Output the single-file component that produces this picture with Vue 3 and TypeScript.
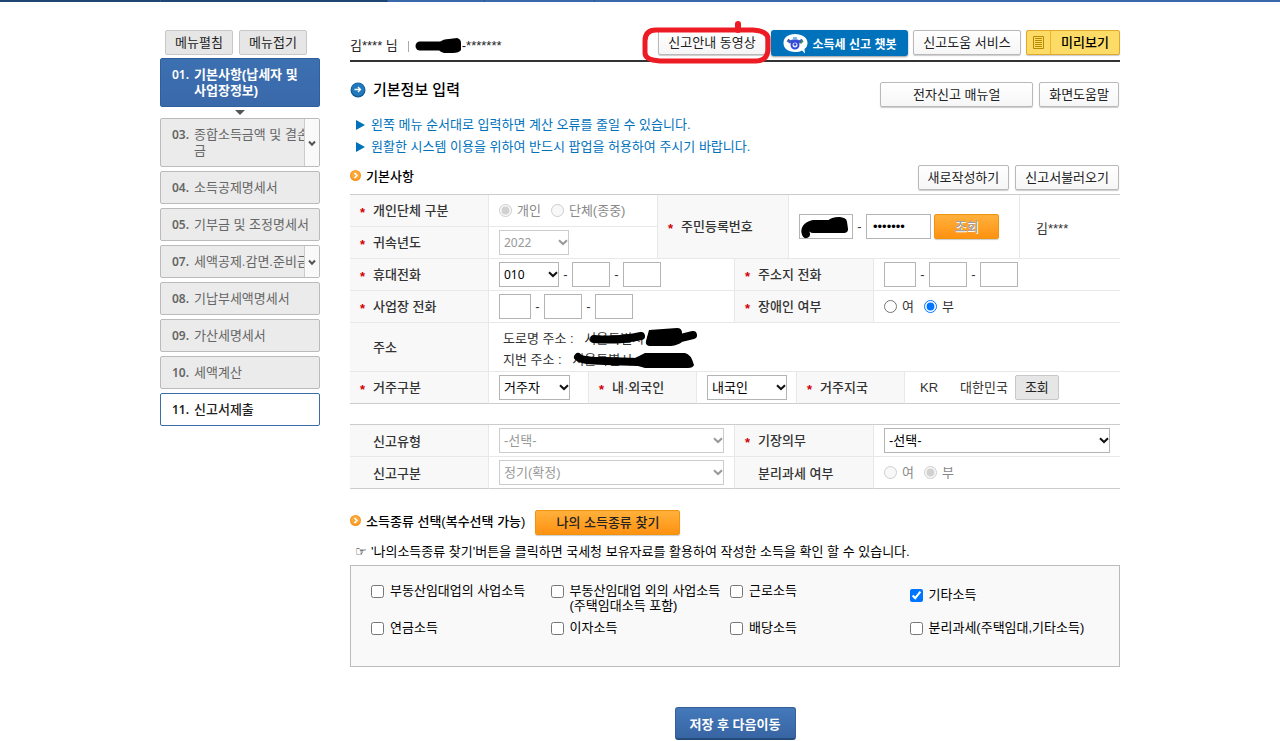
<script setup lang="ts">
import { ref } from 'vue'

interface MenuItem {
  no: string
  label: string
  state?: 'current' | 'ready'
  tall?: boolean
  expandable?: boolean
}

interface Income {
  id: string
  label: string
  note?: string
  low?: boolean
}

const menu: MenuItem[] = [
  { no: '01.', label: '기본사항(납세자 및 사업장정보)', state: 'current', tall: true },
  { no: '03.', label: '종합소득금액 및 결손금', tall: true, expandable: true },
  { no: '04.', label: '소득공제명세서' },
  { no: '05.', label: '기부금 및 조정명세서' },
  { no: '07.', label: '세액공제.감면.준비금', expandable: true },
  { no: '08.', label: '기납부세액명세서' },
  { no: '09.', label: '가산세명세서' },
  { no: '10.', label: '세액계산' },
  { no: '11.', label: '신고서제출', state: 'ready' },
]

const incomes: Income[] = [
  { id: 'rent', label: '부동산임대업의 사업소득' },
  { id: 'business', label: '부동산임대업 외의 사업소득', note: '(주택임대소득 포함)' },
  { id: 'wage', label: '근로소득' },
  { id: 'other', label: '기타소득', low: true },
  { id: 'pension', label: '연금소득' },
  { id: 'interest', label: '이자소득' },
  { id: 'dividend', label: '배당소득' },
  { id: 'separate', label: '분리과세(주택임대,기타소득)' },
]

const chosen = ref<string[]>(['other'])
const entity = ref('person')
const disabledPerson = ref('no')
const separateTax = ref('no')
const secret = ref('0000000')
</script>

<template>
  <div class="page">
    <div class="gnb"><span class="gnb-a"></span><span class="gnb-b"></span><span class="gnb-c"></span><span class="gnb-d"></span></div>
    <div class="wrap">
      <aside class="side">
        <div class="fold">
          <button type="button" class="btn gray">메뉴펼침</button>
          <button type="button" class="btn gray">메뉴접기</button>
        </div>
        <ul class="menu">
          <li v-for="m in menu" :key="m.no" :class="[m.state, { tall: m.tall }]">
            <div class="item">
              <a href="#"><span class="no">{{ m.no }}</span><span class="name">{{ m.label }}</span></a>
              <button v-if="m.expandable" type="button" class="expand" :aria-label="m.label">
                <svg width="8" height="7" viewBox="0 0 8 7"><path d="M1 1.5 4 4.7 7 1.5" fill="none" stroke="#555" stroke-width="2" /></svg>
              </button>
            </div>
            <svg v-if="m.state === 'current'" class="down" width="10" height="5" viewBox="0 0 10 5"><path d="M0 0h10L5 5z" fill="#555" /></svg>
          </li>
        </ul>
      </aside>

      <main class="main">
        <header class="head">
          <div class="user">
            <span>김**** 님</span><i class="bar"></i>
            <svg class="mark-user" width="47" height="16" viewBox="0 0 47 16">
              <path d="M5 8 L28 8" stroke="#000" stroke-width="9" stroke-linecap="round" />
              <path d="M25 4 Q28 1 34 1 L42 0 Q46 1 46 5 L46 12 Q44 15 38 15 L29 15 Q25 14 24 12Z" />
            </svg>
            <span>-*******</span>
          </div>
          <div class="tools">
            <div class="ringed">
              <button type="button" class="btn w108">신고안내 동영상</button>
              <svg class="ring" width="132" height="44" viewBox="0 0 132 44">
                <path d="M15 9 L112 9 Q127 10 127 18 L127 29 Q126 40 115 40 L19 40 Q4 39 4 32 L4 20 Q4 9 15 9Z" fill="none" stroke="#ed1c24" stroke-width="5" />
                <path d="M97 3V9" stroke="#ed1c24" stroke-width="6" stroke-linecap="round" />
              </svg>
            </div>
            <button type="button" class="chat">
              <svg width="25" height="21" viewBox="0 0 25 21">
                <path d="M12 1C5 1 .5 4.500 .5 10S5 19 12 19c3 0 5-.5 7-1.500L22 20.500 21.500 16c2-1.500 3-3.500 3-6C24.500 4.500 19 1 12 1z" fill="#fff" />
                <path d="M4.500 7 8 9.500M19.500 7 16 9.500" stroke="#3b5fae" stroke-width="3" />
                <path d="M7 7.500q5-2.500 10 0l-1 3H8z" fill="#3c50d8" />
                <circle cx="12" cy="12" r="3.500" fill="#dfe8ff" stroke="#3048d8" stroke-width="2" />
                <circle cx="12" cy="11.500" r="1.300" fill="#2b3fd0" />
                <path d="M10 4h4v2.500h-4z" fill="#7fb6e8" /><path d="m18.500 7 2 1.500-3 3z" fill="#3c9a4a" />
              </svg>
              소득세 신고 챗봇
            </button>
            <button type="button" class="btn w108">신고도움 서비스</button>
            <button type="button" class="preview">
              <span class="doc"><svg width="11" height="13" viewBox="0 0 11 13"><path d="M.5.5h10v12H.5zM2 2.500h7M2 4.500h7M2 6.500h7M2 8.500h7M2 10.500h7" fill="none" stroke="#b78a00" /></svg></span>
              <span class="preview-text">미리보기</span>
            </button>
          </div>
        </header>

        <div class="title-row">
          <svg width="16" height="16" viewBox="0 0 16 16"><circle cx="8" cy="8" r="7.500" fill="#145b94" /><circle cx="8" cy="7.500" r="6.500" fill="#2079bd" /><path d="M4.500 7.500h6M8 5l2.500 2.500L8 10" fill="none" stroke="#fff" stroke-width="1.300" /></svg>
          <h1>기본정보 입력</h1>
          <div class="btns">
            <button type="button" class="btn w153">전자신고 매뉴얼</button>
            <button type="button" class="btn">화면도움말</button>
          </div>
        </div>

        <ul class="info">
          <li><svg width="9" height="10" viewBox="0 0 9 10"><path d="M0 0 9 5 0 10z" fill="#0072bc" /></svg>왼쪽 메뉴 순서대로 입력하면 계산 오류를 줄일 수 있습니다.</li>
          <li><svg width="9" height="10" viewBox="0 0 9 10"><path d="M0 0 9 5 0 10z" fill="#0072bc" /></svg>원활한 시스템 이용을 위하여 반드시 팝업을 허용하여 주시기 바랍니다.</li>
        </ul>

        <div class="section">
          <svg class="dot" width="11" height="11" viewBox="0 0 11 11"><circle cx="5.500" cy="5.500" r="5.500" fill="#f7941d" /><circle cx="5.500" cy="5" r="4.300" fill="#fba93a" /><path d="m4.500 3 2.500 2.500L4.500 8" fill="none" stroke="#fff" stroke-width="1.500" /></svg>
          <h2>기본사항</h2>
          <div class="btns">
            <button type="button" class="btn">새로작성하기</button>
            <button type="button" class="btn">신고서불러오기</button>
          </div>
        </div>

        <table class="form">
          <colgroup>
            <col class="c139" /><col class="c100" /><col class="c69" /><col class="c39" /><col class="c38" /><col class="c54" />
            <col class="c8" /><col class="c77" /><col class="c31" /><col class="c115" /><col class="c100" />
          </colgroup>
          <tbody>
            <tr>
              <th scope="row"><i class="req">*</i>개인단체 구분</th>
              <td colspan="2">
                <div class="row radios faded">
                  <label><input v-model="entity" type="radio" name="entity" value="person" disabled />개인</label>
                  <label><input v-model="entity" type="radio" name="entity" value="group" disabled />단체(종중)</label>
                </div>
              </td>
              <th scope="row" colspan="3" rowspan="2"><i class="req">*</i>주민등록번호</th>
              <td colspan="4" rowspan="2">
                <div class="row">
                  <span class="hidden-id">
                    <input type="text" class="w54" aria-label="주민등록번호 앞자리" />
                    <svg class="mark-id" width="50" height="22" viewBox="0 0 50 22"><path d="M6 18 Q3 11 13 8 L30 8 Q33 5 39 5 L43 6 L44 13 L13 13" fill="#000" stroke="#000" stroke-width="8" stroke-linejoin="round" stroke-linecap="round" /></svg>
                  </span>
                  <span class="dash">-</span>
                  <input v-model="secret" type="password" class="w65" aria-label="주민등록번호 뒷자리" />
                  <button type="button" class="orange lookup" disabled>조회</button>
                </div>
              </td>
              <td rowspan="2" class="owner">김****</td>
            </tr>
            <tr>
              <th scope="row"><i class="req">*</i><label for="year">귀속년도</label></th>
              <td colspan="2">
                <span class="select digits w70 off"><select id="year" disabled><option>2022</option></select><svg viewBox="0 0 10 7"><path d="M1 1.200 5 5 9 1.200" /></svg></span>
              </td>
            </tr>
            <tr>
              <th scope="row"><i class="req">*</i><label for="mobile">휴대전화</label></th>
              <td colspan="4">
                <div class="row">
                  <span class="select digits w60"><select id="mobile"><option>010</option></select><svg viewBox="0 0 10 7"><path d="M1 1.200 5 5 9 1.200" /></svg></span>
                  <span class="dash">-</span><input type="text" class="w38" aria-label="휴대전화 가운데" />
                  <span class="dash">-</span><input type="text" class="w38" aria-label="휴대전화 끝" />
                </div>
              </td>
              <th scope="row" colspan="3"><i class="req">*</i><label for="home">주소지 전화</label></th>
              <td colspan="3">
                <div class="row">
                  <input id="home" type="text" class="w32" />
                  <span class="dash">-</span><input type="text" class="w38" aria-label="주소지 전화 가운데" />
                  <span class="dash">-</span><input type="text" class="w38" aria-label="주소지 전화 끝" />
                </div>
              </td>
            </tr>
            <tr>
              <th scope="row"><i class="req">*</i><label for="office">사업장 전화</label></th>
              <td colspan="4">
                <div class="row">
                  <input id="office" type="text" class="w32" />
                  <span class="dash">-</span><input type="text" class="w38" aria-label="사업장 전화 가운데" />
                  <span class="dash">-</span><input type="text" class="w38" aria-label="사업장 전화 끝" />
                </div>
              </td>
              <th scope="row" colspan="3"><i class="req">*</i>장애인 여부</th>
              <td colspan="3">
                <div class="row radios">
                  <label><input v-model="disabledPerson" type="radio" name="handicap" value="yes" />여</label>
                  <label><input v-model="disabledPerson" type="radio" name="handicap" value="no" />부</label>
                </div>
              </td>
            </tr>
            <tr class="address">
              <th scope="row"><i class="req"></i>주소</th>
              <td colspan="10">
                <p>도로명 주소 : <span class="addr">서울특별시
                  <svg class="first" width="114" height="20" viewBox="0 0 114 20"><path d="M9 11 Q35 13 56 8M66 11 L96 10 L108 7" fill="none" stroke="#000" stroke-width="8" stroke-linecap="round" /><path d="M64 2 L92 0 Q97 0 97 5 L97 14 Q93 17 86 18 L64 18 Q60 17 61 13Z" /></svg>
                </span></p>
                <p>지번 주소 : <span class="addr">서울특별시
                  <svg class="second" width="122" height="18" viewBox="0 0 122 18"><path d="M5 5 Q9 9 32 9 L66 10" fill="none" stroke="#000" stroke-width="8" stroke-linecap="round" /><path d="M60 7 L72 1 L112 1 Q118 2 121 13 Q120 16 115 16 L72 16 Q66 14 60 13Z" /></svg>
                </span></p>
              </td>
            </tr>
            <tr>
              <th scope="row"><i class="req">*</i><label for="reside">거주구분</label></th>
              <td><span class="select w71"><select id="reside"><option>거주자</option></select><svg viewBox="0 0 10 7"><path d="M1 1.200 5 5 9 1.200" /></svg></span></td>
              <th scope="row" colspan="2"><i class="req">*</i><label for="nation">내·외국인</label></th>
              <td colspan="3"><span class="select w80"><select id="nation"><option>내국인</option></select><svg viewBox="0 0 10 7"><path d="M1 1.200 5 5 9 1.200" /></svg></span></td>
              <th scope="row" colspan="2"><i class="req">*</i>거주지국</th>
              <td colspan="2">
                <div class="row country"><span class="code">KR</span><span>대한민국</span><button type="button" class="btn gray small">조회</button></div>
              </td>
            </tr>
          </tbody>
        </table>

        <table class="form second-form">
          <colgroup><col class="c139" /><col class="c246" /><col class="c139" /><col class="c246" /></colgroup>
          <tbody>
            <tr>
              <th scope="row"><i class="req"></i><label for="kind">신고유형</label></th>
              <td><span class="select wide off"><select id="kind" disabled><option>-선택-</option></select><svg viewBox="0 0 10 7"><path d="M1 1.200 5 5 9 1.200" /></svg></span></td>
              <th scope="row"><i class="req">*</i><label for="books">기장의무</label></th>
              <td><span class="select wide"><select id="books"><option>-선택-</option></select><svg viewBox="0 0 10 7"><path d="M1 1.200 5 5 9 1.200" /></svg></span></td>
            </tr>
            <tr>
              <th scope="row"><i class="req"></i><label for="period">신고구분</label></th>
              <td><span class="select wide off"><select id="period" disabled><option>정기(확정)</option></select><svg viewBox="0 0 10 7"><path d="M1 1.200 5 5 9 1.200" /></svg></span></td>
              <th scope="row"><i class="req"></i>분리과세 여부</th>
              <td>
                <div class="row radios faded">
                  <label><input v-model="separateTax" type="radio" name="separate" value="yes" disabled />여</label>
                  <label><input v-model="separateTax" type="radio" name="separate" value="no" disabled />부</label>
                </div>
              </td>
            </tr>
          </tbody>
        </table>

        <div class="section income-head">
          <svg class="dot" width="11" height="11" viewBox="0 0 11 11"><circle cx="5.500" cy="5.500" r="5.500" fill="#f7941d" /><circle cx="5.500" cy="5" r="4.300" fill="#fba93a" /><path d="m4.500 3 2.500 2.500L4.500 8" fill="none" stroke="#fff" stroke-width="1.500" /></svg>
          <h2>소득종류 선택(복수선택 가능)</h2>
          <button type="button" class="orange find">나의 소득종류 찾기</button>
        </div>
        <p class="note"><span class="hand">☞</span>'나의소득종류 찾기'버튼을 클릭하면 국세청 보유자료를 활용하여 작성한 소득을 확인 할 수 있습니다.</p>

        <div class="incomes">
          <label v-for="i in incomes" :key="i.id" :class="{ low: i.low }">
            <input v-model="chosen" type="checkbox" :value="i.id" />
            <span>{{ i.label }}<template v-if="i.note"><br />{{ i.note }}</template></span>
          </label>
        </div>

        <div class="foot"><button type="button" class="save">저장 후 다음이동</button></div>
      </main>
    </div>
  </div>
</template>

<style>
body {
  margin: 0;
  background: #fff;
}
</style>

<style scoped>
.page,
.page button,
.page input,
.page select {
  font-family: "Liberation Sans", "Noto Sans CJK KR", sans-serif;
  font-size: 13px;
}
.page {
  color: #333;
  line-height: 16px;
}
.page * {
  box-sizing: border-box;
}
ul,
p,
h1,
h2 {
  margin: 0;
  padding: 0;
}
ul {
  list-style: none;
}
button {
  cursor: pointer;
  white-space: nowrap;
}
i {
  font-style: normal;
}

.gnb {
  display: flex;
  height: 2px;
  background: #3a69ab;
}
.gnb span {
  border-right: 1px solid #2a5590;
}
.gnb-a {
  width: 161px;
  background: #1f4573;
}
.gnb-b {
  width: 227px;
  background: #1f4573;
}
.gnb-c {
  width: 97px;
}
.gnb-d {
  width: 110px;
}

.wrap {
  display: flex;
  gap: 30px;
  max-width: 960px;
  margin: 0 auto;
  padding-top: 28px;
}
.side {
  flex: 0 0 160px;
  min-width: 0;
}
.main {
  flex: 1;
  min-width: 0;
}

.btn {
  height: 25px;
  padding: 0 9px;
  border: 1px solid #b9b9b9;
  border-radius: 2px;
  background: linear-gradient(#fff, #f6f6f6);
  box-shadow: 0 1px 1px #ccc;
  color: #222;
  line-height: 21px;
}
.btn.gray {
  background: #e6e6e6;
  border-color: #c8c8c8;
  box-shadow: none;
}
.w108 {
  width: 108px;
}
.w153 {
  width: 153px;
}

.fold {
  display: flex;
  gap: 6px;
  padding-left: 5px;
}
.fold .btn {
  width: 68px;
  padding: 0;
}
.menu {
  display: flex;
  flex-direction: column;
  gap: 4px;
  margin-top: 3px;
}
.item {
  display: flex;
  height: 33px;
  overflow: hidden;
  border: 1px solid #bbb;
  border-radius: 2px;
  background: #ebebeb;
}
.tall .item {
  height: 49px;
}
.item a {
  display: flex;
  flex: 1;
  min-width: 0;
  overflow: hidden;
  padding: 8px 0 0 11px;
  color: #666;
  text-decoration: none;
}
.no {
  flex: 0 0 22px;
  font-family: "Noto Sans", sans-serif;
  font-size: 12px;
  font-weight: 600;
}
.name {
  flex: 0 0 124px;
}
.expand {
  flex: 0 0 15px;
  padding: 0;
  border: 0;
  border-left: 1px solid #ccc;
  background: #f9f9f9;
}
.current .item {
  border-color: #2f5f9f;
  background: linear-gradient(#3c70b1, #3a69aa);
}
.current a {
  color: #fff;
  font-weight: 700;
}
.current .name {
  flex-basis: 112px;
}
.down {
  display: block;
  margin: 3px auto -1px;
}
.ready .item {
  border-color: #3a6eab;
  background: #fff;
}
.ready a {
  color: #222;
  font-weight: 500;
}

.head {
  display: flex;
  justify-content: space-between;
  height: 32px;
  border-bottom: 2px solid #333;
}
.user {
  display: flex;
  align-items: center;
  height: 32px;
  color: #222;
}
.bar {
  width: 1px;
  height: 11px;
  margin: 0 6px 0 10px;
  background: #aaa;
}
.tools {
  display: flex;
  gap: 5px;
}
.ringed {
  position: relative;
}
.ring {
  position: absolute;
  left: -17px;
  top: -9px;
  z-index: 1;
  pointer-events: none;
}
.chat {
  display: flex;
  align-items: center;
  justify-content: center;
  gap: 5px;
  width: 137px;
  height: 26px;
  padding: 0;
  border: 0;
  border-radius: 3px;
  background: #0072bc;
  box-shadow: 0 1px 2px #999;
  color: #fff;
  font-weight: 700;
}
.page .chat {
  font-size: 12px;
}
.preview {
  display: flex;
  width: 94px;
  height: 25px;
  padding: 0;
  border: 1px solid #e0a92a;
  border-radius: 2px;
  background: #fddb67;
  box-shadow: 0 1px 1px #ccc;
  color: #000;
  font-weight: 500;
}
.doc {
  display: flex;
  align-items: center;
  justify-content: center;
  width: 24px;
  height: 23px;
  border-right: 1px solid #f0b429;
}
.preview-text {
  flex: 1;
  line-height: 24px;
}

.title-row {
  display: flex;
  gap: 7px;
  height: 26px;
  margin-top: 20px;
}
h1 {
  color: #000;
  font-size: 15px;
  font-weight: 500;
  line-height: 16px;
}
.btns {
  display: flex;
  gap: 6px;
  margin-left: auto;
  padding-right: 1px;
}
.info {
  margin-top: 6px;
  padding-left: 6px;
  color: #0072bc;
  line-height: 22px;
}
.info li {
  display: flex;
  align-items: center;
  gap: 6px;
}
.section {
  display: flex;
  align-items: center;
  gap: 5px;
  height: 26px;
  margin-top: 6px;
}
.dot {
  margin-bottom: 4px;
}
h2 {
  color: #000;
  font-size: 13px;
  font-weight: 500;
  line-height: 24px;
}

.form {
  width: 100%;
  margin-top: 4px;
  border-collapse: separate;
  border-spacing: 0;
  border-top: 1px solid #ccc;
  table-layout: fixed;
}
.second-form {
  margin-top: 20px;
}
.form th,
.form td {
  height: 32px;
  padding: 0 0 0 10px;
  border-right: 1px solid #e8e8e8;
  border-bottom: 1px solid #e8e8e8;
  text-align: left;
  vertical-align: middle;
}
.form th {
  padding-top: 2px;
  background: #f8f8f8;
  font-weight: 500;
}
.form tr > :last-child {
  border-right: 0;
}
.form tr:nth-child(2) > td:last-child {
  border-right: 1px solid #e8e8e8;
}
.second-form tr:nth-child(2) > td:last-child {
  border-right: 0;
}
.form tr:last-child > * {
  border-bottom-color: #ccc;
}
.c139 { width: 139px; }
.c100 { width: 100px; }
.c69 { width: 69px; }
.c39 { width: 39px; }
.c38 { width: 38px; }
.c54 { width: 54px; }
.c8 { width: 8px; }
.c77 { width: 77px; }
.c31 { width: 31px; }
.c115 { width: 115px; }
.c246 { width: 246px; }

.req {
  display: inline-block;
  width: 13px;
  color: #d00000;
  font-weight: 700;
  vertical-align: -2px;
}
.row {
  display: flex;
  align-items: center;
}
.dash {
  width: 13px;
  text-align: center;
}
.form input[type="text"],
.form input[type="password"] {
  height: 25px;
  padding: 0 6px;
  border: 1px solid #b4b4b4;
  background: #fff;
}
.w32 { width: 32px; }
.w38 { width: 38px; }
.w54 { width: 54px; }
.w60 { width: 60px; }
.w65 { width: 65px; }
.w70 { width: 70px; }
.w71 { width: 71px; }
.w80 { width: 80px; }
.wide {
  width: calc(100% - 10px);
}
.select {
  display: block;
  position: relative;
  height: 25px;
}
.select select {
  width: 100%;
  height: 25px;
  padding: 0 4px;
  border: 1px solid #b4b4b4;
  border-radius: 0;
  background: #fff;
  appearance: none;
  color: #000;
  opacity: 1;
}
.digits select {
  font-family: "Noto Sans", sans-serif;
  font-size: 12px;
}
.select svg {
  position: absolute;
  right: 1px;
  top: 9px;
  width: 10px;
  height: 7px;
  fill: none;
  stroke: #111;
  stroke-width: 2;
  pointer-events: none;
}
.off select {
  border-color: #ccc;
  color: #999;
}
.off svg {
  stroke: #999;
}
.radios {
  gap: 10px;
}
.radios label {
  display: flex;
  align-items: center;
  gap: 5px;
}
.radios input {
  width: 13px;
  height: 13px;
  margin: 0;
}
.faded {
  color: #888;
}
.hidden-id {
  display: flex;
  position: relative;
}
.mark-id {
  position: absolute;
  left: 1px;
  top: 2px;
}
.orange {
  height: 25px;
  padding: 0;
  border: 1px solid #f0930f;
  border-radius: 2px;
  background: linear-gradient(#ffb13c, #ff9212);
  box-shadow: 0 1px 1px #ccc;
  color: #222;
  font-weight: 500;
  line-height: 21px;
}
.lookup {
  width: 65px;
  margin-left: 3px;
  color: #a0a0a0;
  text-shadow: 1px 1px 0 #fff;
}
.form .owner {
  padding: 4px 0 0 16px;
}
.form .address td {
  height: 49px;
  padding: 4px 0 0 14px;
}
.address p {
  line-height: 21px;
}
.addr {
  position: relative;
  margin-left: 7px;
}
.addr svg {
  position: absolute;
  left: 1px;
}
.addr .first {
  top: -3px;
}
.addr .second {
  top: 0;
}
.code {
  width: 40px;
}
.country {
  padding-left: 5px;
}
.small {
  width: 44px;
  margin-left: 7px;
}

.income-head {
  margin-top: 20px;
}
.find {
  width: 145px;
  margin-left: 5px;
}
.note {
  margin-top: 6px;
  padding-left: 5px;
  color: #000;
  line-height: 22px;
}
.hand {
  display: inline-block;
  width: 16px;
  font-family: "DejaVu Sans", sans-serif;
}
.incomes {
  display: grid;
  grid-template-columns: repeat(4, minmax(0, 1fr));
  row-gap: 7px;
  margin-top: 2px;
  padding: 17px 30px 30px 20px;
  min-height: 102px;
  border: 1px solid #bbb;
  background: #f9f9f9;
  color: #000;
  line-height: 15px;
  white-space: nowrap;
  align-content: start;
}
.incomes label {
  display: flex;
  align-items: flex-start;
  gap: 6px;
}
.incomes input {
  width: 13px;
  height: 13px;
  margin: 2px 0 0;
}
.incomes .low {
  padding-top: 4px;
}
.foot {
  display: flex;
  justify-content: center;
  margin-top: 40px;
}
.save {
  width: 121px;
  height: 33px;
  padding: 0;
  border: 1px solid #355f98;
  border-bottom: 2px solid #254a7c;
  border-radius: 3px;
  background: linear-gradient(#4479bb, #3865a3);
  color: #fff;
  font-weight: 700;
}
</style>
